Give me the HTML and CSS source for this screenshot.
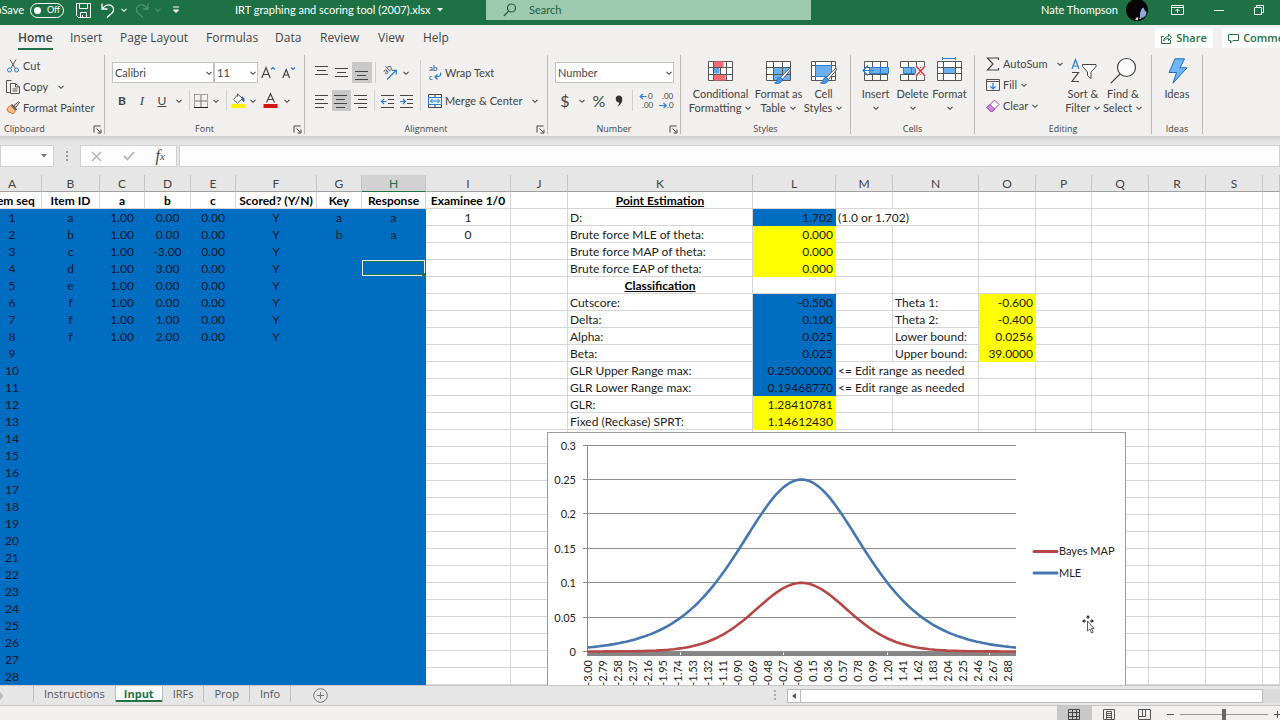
FILE: index.html
```html
<!DOCTYPE html>
<html lang="en">
<head>
<meta charset="utf-8">
<title>IRT graphing and scoring tool (2007).xlsx - Excel</title>
<link rel="stylesheet" href="styles.css">
</head>
<body>
<svg class="defs" aria-hidden="true">
  <symbol id="chev" viewBox="0 0 8 8"><path d="M1.5 2.8 4 5.3 6.5 2.8" fill="none" stroke="currentColor" stroke-width="1.1"/></symbol>
  <symbol id="launch" viewBox="0 0 9 9"><path d="M1 7.5V1h6.5M3.5 3.5l4 4M8 4.5V8H4.500" fill="none" stroke="currentColor"/></symbol>
  <symbol id="brush" viewBox="0 0 18 18"><path d="M17 .8 7.500 10.200l2 2.200L17.600 2.800Z" fill="#fff" stroke="#555"/><path d="M7.200 10.500c-2 0-3 1.200-3.200 3-.1 1.500-1.200 2-2.500 2.300 1.500 1.200 6.500 1.300 8-2.800Z" fill="#4a9ae0" stroke="#2b6fb5"/></symbol>
</svg>

<header class="titlebar">
  <div class="quick">
    <span class="autosave">AutoSave</span>
    <button class="toggle" aria-label="AutoSave off"><i></i>Off</button>
    <button class="q-save" aria-label="Save"><svg width="15" height="15" viewBox="0 0 15 15" fill="none" stroke="#fff"><path d="M.5.5h14v14H2.500l-2-2ZM3.500.5v5h8v-5M4.500 14.500v-5h6v5M6.500 12v2"/></svg></button>
    <button class="q-undo" aria-label="Undo"><svg width="14" height="15" viewBox="0 0 14 15" fill="none" stroke="#fff" stroke-width="1.300"><path d="M1 .5v5.500h5.500M1.200 5.800C4 2 8 .8 10.800 3c2.500 2 2.200 5 .2 7l-5 4.500"/></svg></button>
    <button class="q-chev" aria-label="Undo list"><svg width="8" height="8"><use href="#chev"/></svg></button>
    <button class="q-redo dim" aria-label="Redo"><svg width="14" height="15" viewBox="0 0 14 15" fill="none" stroke="currentColor" stroke-width="1.300"><path d="M13 .5v5.500H7.500M12.800 5.800C10 2 6 .8 3.200 3 .7 5 1 8 3 10l5 4.500"/></svg></button>
    <button class="q-chev dim" aria-label="Redo list"><svg width="8" height="8"><use href="#chev"/></svg></button>
    <button class="q-more" aria-label="Customize toolbar"><svg width="8" height="8" viewBox="0 0 8 8"><path d="M1 1h6M1.500 4 4 6.500 6.500 4Z" fill="#fff" stroke="#fff"/></svg></button>
    <span class="doc">IRT graphing and scoring tool (2007).xlsx</span>
    <svg width="6" height="4" viewBox="0 0 6 4"><path d="M0 0h6L3 3.500Z" fill="#fff"/></svg>
  </div>
  <label class="search"><svg width="14" height="14" viewBox="0 0 14 14" fill="none" stroke="#1f5c3b" stroke-width="1.200"><circle cx="8.500" cy="5" r="4"/><path d="M5.700 8 .8 13"/></svg><input type="text" placeholder="Search" aria-label="Search"></label>
  <div class="account">
    <span>Nate Thompson</span>
    <svg class="avatar" width="22" height="22" viewBox="0 0 22 22"><circle cx="11" cy="11" r="11" fill="#060608"/><path d="M14 19v-5l1.500-4 2-1.500 1 2.500 2 2-.5 3-2.500 2.500Z" fill="#8fa9d6"/><path d="M9 20.500 11 18l1.500 1-1 2.500ZM13 20l1-1.500 1.500 1.500Z" fill="#d8d6dc"/></svg>
    <button aria-label="Ribbon display options"><svg width="13" height="10" viewBox="0 0 13 10" fill="none" stroke="#fff"><path d="M.5.5h12v9H.5ZM.5 2.500h12M6.500 8V4M4.500 6l2-2 2 2"/></svg></button>
    <button aria-label="Minimize"><svg width="10" height="10" viewBox="0 0 10 10" stroke="#fff"><path d="M0 5.500h10"/></svg></button>
    <button aria-label="Restore"><svg width="10" height="10" viewBox="0 0 10 10" fill="none" stroke="#fff"><path d="M.5 2.500h7v7h-7ZM2.500 2.500v-2h7v7h-2"/></svg></button>
  </div>
</header>

<nav class="tabs">
  <div class="tablist">
    <button class="on">Home</button><button>Insert</button><button>Page Layout</button><button>Formulas</button><button>Data</button><button>Review</button><button>View</button><button>Help</button>
  </div>
  <div class="share">
    <button><svg width="11" height="11" viewBox="0 0 11 11" fill="none" stroke="#217346"><path d="M3 3.500H.5v7h9V7M2.500 8C3 5 5 3.500 7.500 3.500V1l3 3.500-3 3V5.500C5 5.500 3.500 6.500 2.500 8Z"/></svg>Share</button>
    <button class="comments"><svg width="11" height="11" viewBox="0 0 11 11" fill="none" stroke="#217346"><path d="M.5 1.500h10v6H5l-2.500 2.500V7.500h-2Z"/></svg>Comments</button>
  </div>
</nav>

<section class="ribbon">
  <div class="group g-clip">
    <div class="stack">
      <button><svg width="14" height="14" viewBox="0 0 14 14" fill="none" stroke="#555"><path d="M4 .5 9 9M10 .5 5 9"/><circle cx="3.500" cy="11" r="2" stroke="#2b7cd3"/><circle cx="10.500" cy="11" r="2" stroke="#2b7cd3"/></svg>Cut</button>
      <button><svg width="14" height="14" viewBox="0 0 14 14" fill="none" stroke="#555"><path d="M4.500 12.500H.5V.5h5M4.500 3.500h5l4 3.500v6.500h-9ZM9.500 3.500V7h4M6.500 9h5M6.500 11h5"/></svg>Copy<svg class="far" width="8" height="8"><use href="#chev"/></svg></button>
      <button><svg width="14" height="14" viewBox="0 0 14 14"><path d="M12.500.8 8 4.500l1.800 2 3.500-4.800Z" fill="#ddd" stroke="#555"/><path d="M5.500 3.500 10.500 9" stroke="#555" stroke-width="1.800"/><path d="M4.500 4.500 9.500 9.800 7 13 4.500 11.500 2.500 11 .8 7.800Z" fill="#f8c28a" stroke="#d2691e"/></svg>Format Painter</button>
    </div>
    <div class="glabel">Clipboard<button aria-label="Clipboard settings"><svg width="9" height="9"><use href="#launch"/></svg></button></div>
  </div>

  <div class="group g-font">
    <div class="rows">
      <div class="row">
        <span class="combo c-font"><select aria-label="Font"><option>Calibri</option></select><svg width="8" height="8"><use href="#chev"/></svg></span><span class="combo c-size"><select aria-label="Font size"><option>11</option></select><svg width="8" height="8"><use href="#chev"/></svg></span>
        <button class="grow" aria-label="Increase font size"><svg width="14" height="14" viewBox="0 0 14 14" fill="none" stroke="#444" stroke-width="1.200"><path d="M.8 12 5 1.500 9.200 12M2.300 8.500h5.400"/><path d="M10 3.500 12 1.500l2 2" stroke="#2b7cd3"/></svg></button>
        <button class="grow" aria-label="Decrease font size"><svg width="14" height="14" viewBox="0 0 14 14" fill="none" stroke="#444" stroke-width="1.200"><path d="M1.800 12 5.200 3.500 8.600 12M3 9h4.400"/><path d="m10 1.500 2 2 2-2" stroke="#2b7cd3"/></svg></button>
      </div>
      <div class="row">
        <button class="w20 bold">B</button><button class="w20 ital">I</button><button class="w20 under">U</button><button class="ch" aria-label="Underline styles"><svg width="8" height="8"><use href="#chev"/></svg></button>
        <i class="sep"></i>
        <button class="w16" aria-label="Borders"><svg width="14" height="14" viewBox="0 0 14 14" fill="none" stroke="#555"><path d="M.5.5h13v13" stroke-dasharray="1 1"/><path d="M.5.5v13" stroke-dasharray="1 1"/><path d="M7 1v12M1 7h12" stroke="#777"/><path d="M0 13.500h14" stroke="#222"/></svg></button><button class="ch" aria-label="Border styles"><svg width="8" height="8"><use href="#chev"/></svg></button>
        <i class="sep"></i>
        <button class="w16" aria-label="Fill color"><svg width="15" height="15" viewBox="0 0 15 15"><path d="M7 1.500 2.500 6.500 6.500 10l5-4.500ZM6.500.5v3" fill="#fff" stroke="#555"/><path d="M11 4c2 .5 2.500 2.500 1.800 4.500-1.300-.5-1.800-2-1.800-4.500Z" fill="#2b5c9e" stroke="#2b5c9e"/><path d="M.5 11h14v4H.5Z" fill="#fff200"/></svg></button><button class="ch" aria-label="Fill colors"><svg width="8" height="8"><use href="#chev"/></svg></button>
        <button class="w20" aria-label="Font color"><svg width="15" height="15" viewBox="0 0 15 15"><path d="M3.500 9.500 7.500.8l4 8.700M5 6.500h5" fill="none" stroke="#444" stroke-width="1.200"/><path d="M.5 11h14v4H.5Z" fill="#d41515"/></svg></button><button class="ch" aria-label="Font colors"><svg width="8" height="8"><use href="#chev"/></svg></button>
      </div>
    </div>
    <div class="glabel">Font<button aria-label="Font settings"><svg width="9" height="9"><use href="#launch"/></svg></button></div>
  </div>

  <div class="group g-align">
    <div class="pair">
      <div class="rows">
        <div class="row">
          <button class="w20" aria-label="Top align"><svg width="14" height="14" viewBox="0 0 14 14" stroke="#444"><path d="M0 .5h13M2 4.500h9M0 8.500h13"/></svg></button><button class="w20" aria-label="Middle align"><svg width="14" height="14" viewBox="0 0 14 14" stroke="#444"><path d="M0 2.500h13M2 6.500h9M0 10.500h13"/></svg></button><button class="w20 act" aria-label="Bottom align"><svg width="14" height="14" viewBox="0 0 14 14" stroke="#444"><path d="M0 5.500h13M2 9.500h9M0 13.500h13"/></svg></button>
          <i class="sep"></i>
          <button class="w20" aria-label="Orientation"><svg width="17" height="15" viewBox="0 0 17 15"><text x="0" y="0" transform="translate(5 10) rotate(-45)" font-size="9" fill="#444">ab</text><path d="M6 14.500 15 5.500M11 5.300h4.300V9.500" fill="none" stroke="#2b7cd3" stroke-width="1.200"/></svg></button><button class="ch" aria-label="Orientation list"><svg width="8" height="8"><use href="#chev"/></svg></button>
        </div>
        <div class="row">
          <button class="w20" aria-label="Align left"><svg width="14" height="14" viewBox="0 0 14 14" stroke="#444"><path d="M0 1.500h13M0 5.500h9M0 9.500h13M0 13.500h9"/></svg></button><button class="w20 act" aria-label="Center"><svg width="14" height="14" viewBox="0 0 14 14" stroke="#444"><path d="M0 1.500h13M2 5.500h9M0 9.500h13M2 13.500h9"/></svg></button><button class="w20" aria-label="Align right"><svg width="14" height="14" viewBox="0 0 14 14" stroke="#444"><path d="M0 1.500h13M4 5.500h9M0 9.500h13M4 13.500h9"/></svg></button>
          <i class="sep"></i>
          <button class="w20" aria-label="Decrease indent"><svg width="14" height="14" viewBox="0 0 14 14" stroke="#444" fill="none"><path d="M0 1.500h13M7 5.500h6M7 9.500h6M0 13.500h13"/><path d="M5.500 7.500H.8M3 5 .5 7.500 3 10" stroke="#2b7cd3" stroke-width="1.200"/></svg></button><button class="w20" aria-label="Increase indent"><svg width="14" height="14" viewBox="0 0 14 14" stroke="#444" fill="none"><path d="M0 1.500h13M7 5.500h6M7 9.500h6M0 13.500h13"/><path d="M0 7.500h5M3 5l2.500 2.500L3 10" stroke="#2b7cd3" stroke-width="1.200"/></svg></button>
        </div>
      </div>
      <div class="rows side">
        <div class="row"><button class="lab"><svg width="14" height="15" viewBox="0 0 14 15"><text x="1" y="6" font-size="8" fill="#444">ab</text><text x="1" y="15" font-size="8" fill="#444">c</text><path d="M12.500 7.500c1 3-1 4.500-5.500 4.500M9.500 9.500 7 12l2.500 2.500" fill="none" stroke="#2b7cd3" stroke-width="1.200"/></svg>Wrap Text</button></div>
        <div class="row"><button class="lab"><svg width="14" height="14" viewBox="0 0 14 14" fill="none" stroke="#444"><path d="M.5.5h13v13H.5ZM7 .5V4M7 10v3.500"/><path d="M.5 3.500h13v7H.5Z" fill="#e4f1fc" stroke="#2b7cd3"/><path d="M2.500 7h9M4.500 5l-2 2 2 2M9.500 5l2 2-2 2" stroke="#2b7cd3"/></svg>Merge &amp; Center<svg class="far" width="8" height="8"><use href="#chev"/></svg></button></div>
      </div>
    </div>
    <div class="glabel">Alignment<button aria-label="Alignment settings"><svg width="9" height="9"><use href="#launch"/></svg></button></div>
  </div>

  <div class="group g-num">
    <div class="rows">
      <div class="row"><span class="combo c-num"><select aria-label="Number format"><option>Number</option></select><svg width="8" height="8"><use href="#chev"/></svg></span></div>
      <div class="row">
        <button class="w20 big">$</button><button class="ch" aria-label="Currency list"><svg width="8" height="8"><use href="#chev"/></svg></button><button class="w20 big">%</button><button class="w20" aria-label="Comma style"><svg width="8" height="12" viewBox="0 0 8 12"><path d="M4 .5c2 0 3.300 1.500 3.300 3.800C7.300 8 5 10.500 2 11.500c1.500-1.200 2.300-2.500 2.300-4C2.200 7.600.7 6 .7 4 .7 2 2 .5 4 .5Z" fill="#333"/></svg></button>
        <i class="sep"></i>
        <button class="w20" aria-label="Increase decimal"><svg width="15" height="16" viewBox="0 0 15 16"><text x="9" y="6" font-size="8" fill="#444">0</text><text x="3" y="15" font-size="8" fill="#444">.00</text><path d="M7.500 3.500h-6M4 1 1.200 3.500 4 6" fill="none" stroke="#2b7cd3" stroke-width="1.200"/></svg></button><button class="w20" aria-label="Decrease decimal"><svg width="15" height="16" viewBox="0 0 15 16"><text x="3" y="6" font-size="8" fill="#444">.00</text><text x="8" y="15" font-size="8" fill="#444">.0</text><path d="M0 12.500h7M4.500 10l2.800 2.500L4.500 15" fill="none" stroke="#2b7cd3" stroke-width="1.200"/></svg></button>
      </div>
    </div>
    <div class="glabel">Number<button aria-label="Number settings"><svg width="9" height="9"><use href="#launch"/></svg></button></div>
  </div>

  <div class="group g-styles">
    <div class="bigs">
      <button><svg width="27" height="27" viewBox="0 0 27 27" fill="none"><path d="M1.500 3.500h24v19h-24Z" fill="#fff" stroke="#555"/><path d="M6.500 3.500h10v6h-10ZM6.500 16.500h12v6h-12Z" fill="#ff6b72"/><path d="M6.500 9.500h6v6h-6Z" fill="#5da5e8"/><path d="M1.500 9.500h24M1.500 16.500h24M6.500 3.500v19M19.500 3.500v19M13.500 9.500v7" stroke="#555"/></svg><span>Conditional<br>Formatting <svg width="8" height="8"><use href="#chev"/></svg></span></button>
      <button><svg width="27" height="27" viewBox="0 0 27 27" fill="none"><path d="M1.500 3.500h24v19h-24Z" fill="#fff"/><path d="M8.500 9.500h17v13h-17Z" fill="#6db0ee"/><path d="M1.500 3.500h24v19h-24ZM1.500 9.500h24M1.500 16.500h24M8.500 3.500v19M17.500 3.500v19" stroke="#555"/><use href="#brush" x="8" y="9" width="18" height="18"/></svg><span>Format as<br>Table <svg width="8" height="8"><use href="#chev"/></svg></span></button>
      <button><svg width="27" height="27" viewBox="0 0 27 27" fill="none"><path d="M1.500 3.500h24v19h-24Z" fill="#fff" stroke="#555"/><path d="M5.500 3.500v19M1.500 7.500h24M1.500 18.500h24M21.500 3.500v19" stroke="#555"/><path d="M5.500 7.500h16v11h-16Z" fill="#6db0ee" stroke="#2b7cd3"/><use href="#brush" x="9" y="9" width="18" height="18"/></svg><span>Cell<br>Styles <svg width="8" height="8"><use href="#chev"/></svg></span></button>
    </div>
    <div class="glabel">Styles</div>
  </div>

  <div class="group g-cells">
    <div class="bigs">
      <button><svg width="27" height="27" viewBox="0 0 27 27" fill="none"><path d="M2.500 3.500h23v19h-23ZM2.500 9.500h23M2.500 16.500h23M10.500 3.500v19M18.500 3.500v19" fill="#fff" stroke="#555"/><path d="M7.500 9.500h19v6h-19Z" fill="#6db0ee" stroke="#2b7cd3"/><path d="M18.500 9.500v6M12 12.500H.8M6 7.500l-5 5 5 5" stroke="#2b7cd3" stroke-width="1.200"/></svg><span>Insert<br><svg width="8" height="8"><use href="#chev"/></svg></span></button>
      <button><svg width="27" height="27" viewBox="0 0 27 27" fill="none"><path d="M1.500 3.500h24v6h-24ZM1.500 16.500h24v6h-24ZM9.500 3.500v6M17.500 3.500v6M9.500 16.500v6M17.500 16.500v6" fill="#fff" stroke="#555"/><path d="M4.500 9.500h12v6h-12Z" fill="#6db0ee" stroke="#2b7cd3"/><path d="M12.500 9.500v6" stroke="#2b7cd3"/><path d="m17 8 9 10M26 8 17 18" stroke="#f1f0ef" stroke-width="4"/><path d="m17 8 9 10M26 8 17 18" stroke="#e0393e" stroke-width="1.400"/></svg><span>Delete<br><svg width="8" height="8"><use href="#chev"/></svg></span></button>
      <button><svg width="27" height="27" viewBox="0 0 27 27" fill="none"><path d="M1.500 3.500h24v19h-24Z" fill="#fff" stroke="#555"/><path d="M7.500 9.500h12v6h-12Z" fill="#6db0ee"/><path d="M1.500 9.500h24M1.500 15.500h24M7.500 3.500v19M19.500 3.500v19" stroke="#555"/><path d="M6.500.5h13M6.500-1v3M19.500-1v3" stroke="#2b7cd3"/></svg><span>Format<br><svg width="8" height="8"><use href="#chev"/></svg></span></button>
    </div>
    <div class="glabel">Cells</div>
  </div>

  <div class="group g-edit">
    <div class="pair">
      <div class="stack">
        <button><svg width="14" height="14" viewBox="0 0 14 14" fill="none" stroke="#444" stroke-width="1.200"><path d="M12.500 3V1h-11L7 7l-5.500 6h11v-2"/></svg>AutoSum<svg class="far" width="8" height="8"><use href="#chev"/></svg></button>
        <button><svg width="14" height="14" viewBox="0 0 14 14" fill="none" stroke="#555"><path d="M.5 1.500h13v11H.5ZM.5 3.500h13"/><path d="M7 5v6M4.500 8.500 7 11l2.500-2.500" stroke="#2b7cd3" stroke-width="1.200"/></svg>Fill<svg width="8" height="8"><use href="#chev"/></svg></button>
        <button><svg width="14" height="14" viewBox="0 0 14 14"><path d="M8.500 1 13 5.500 5.500 13 1 8.500Z" fill="#fff" stroke="#a33fb5"/><path d="M4 5.500 8.500 10l-3 3L1 8.500Z" fill="#d48be0" stroke="#a33fb5"/></svg>Clear<svg width="8" height="8"><use href="#chev"/></svg></button>
      </div>
      <div class="bigs">
        <button><svg width="27" height="27" viewBox="0 0 27 27" fill="none"><path d="M2 11 5.500 1.500 9 11M3 8h5" stroke="#2b7cd3" stroke-width="1.200"/><path d="M2 14.500h6.500L2 23.500h7" stroke="#444" stroke-width="1.200"/><path d="M12.500 6.500h13.500v2l-5 5.500v6.500l-3.500-3V14l-5-5.500Z" fill="#fff" stroke="#444"/></svg><span>Sort &amp;<br>Filter <svg width="8" height="8"><use href="#chev"/></svg></span></button>
        <button><svg width="27" height="27" viewBox="0 0 27 27" fill="none" stroke="#444" stroke-width="1.200"><circle cx="16.500" cy="9.500" r="9" fill="#fafafa"/><path d="M10 16 .8 25.200"/></svg><span>Find &amp;<br>Select <svg width="8" height="8"><use href="#chev"/></svg></span></button>
      </div>
    </div>
    <div class="glabel">Editing</div>
  </div>

  <div class="group g-ideas">
    <div class="bigs"><button><svg width="27" height="27" viewBox="0 0 27 27"><path d="M11 .8h9.500l-4.500 9h7L9 25.200l3.500-10.700H5Z" fill="#6db5f5" stroke="#1f6fc0"/></svg><span>Ideas</span></button></div>
    <div class="glabel">Ideas</div>
  </div>
</section>

<section class="formula">
  <button class="namebox" aria-label="Name box"><svg width="6" height="4" viewBox="0 0 6 4"><path d="M0 0h6L3 3.500Z" fill="#777"/></svg></button>
  <svg class="dots" width="3" height="11" viewBox="0 0 3 11"><path d="M1 0v2M1 4v2M1 8v2" stroke="#999" stroke-width="2"/></svg>
  <div class="fx">
    <button aria-label="Cancel"><svg width="11" height="11" viewBox="0 0 11 11" stroke="#b5b5b5" stroke-width="1.500"><path d="m1 1 9 9M10 1 1 10"/></svg></button>
    <button aria-label="Enter"><svg width="12" height="10" viewBox="0 0 12 10" fill="none" stroke="#b5b5b5" stroke-width="1.800"><path d="m1 5 3.500 3.500L11 1"/></svg></button>
    <button class="fn"><i>f</i><small>x</small></button>
  </div>
  <input type="text" class="fbar" aria-label="Formula bar">
</section>

<main class="sheet">
  <table id="grid"></table>
  <svg id="chart" class="chart" width="579" height="260" viewBox="0 0 579 260" role="img" aria-label="Bayes MAP and MLE likelihood by theta"></svg>
  <svg class="cursor" width="13" height="19" viewBox="0 0 13 19"><path d="M6 0l2 2.500H4ZM0 6l2.500-2v4ZM12 6 9.500 4v4Z" fill="#222"/><path d="M2 6h2M8 6h2M6 2v2" stroke="#222"/><path d="M5.500 6v10l2.300-2 1.700 4 1.700-.8-1.700-3.700h2.500Z" fill="#fff" stroke="#333" stroke-width=".8"/></svg>
</main>

<footer>
  <div class="sheets">
    <svg class="nav" width="4" height="8" viewBox="0 0 4 8"><path d="M0 0 3.500 4 0 8Z" fill="#bbb"/></svg>
    <div class="sheetlist">
      <button>Instructions</button><button class="on">Input</button><button>IRFs</button><button>Prop</button><button>Info</button>
    </div>
    <button class="add" aria-label="New sheet"><svg width="15" height="15" viewBox="0 0 15 15" fill="none" stroke="#777"><circle cx="7.500" cy="7.500" r="6.800"/><path d="M7.500 4v7M4 7.500h7"/></svg></button>
    <svg class="dots" width="3" height="11" viewBox="0 0 3 11"><path d="M1 0v2M1 4v2M1 8v2" stroke="#aaa" stroke-width="2"/></svg>
    <div class="hscroll"><button aria-label="Scroll left"><svg width="4" height="6" viewBox="0 0 4 6"><path d="M4 0v6L0 3Z" fill="#555"/></svg></button><i></i></div>
  </div>
  <div class="status">
    <button class="on" aria-label="Normal view"><svg width="13" height="13" viewBox="0 0 13 13" fill="none" stroke="#444"><path d="M.5 1.500h11v10H.5ZM.5 4.500h11M.5 8.500h11M4.500 1.500v10M8.500 1.500v10"/></svg></button>
    <button aria-label="Page layout view"><svg width="13" height="13" viewBox="0 0 13 13" fill="none" stroke="#555"><path d="M.5 1.500h11v10H.5ZM3.500 3.500h5v8h-5ZM4 5.500h4M4 7.500h4M4 9.500h4"/></svg></button>
    <button aria-label="Page break view"><svg width="13" height="13" viewBox="0 0 13 13" fill="none" stroke="#555"><path d="M.5 1.500h12v10H.5ZM.5 8.500h7v-7M4.500 1.500v7"/></svg></button>
    <button class="zoom" aria-label="Zoom out"><svg width="8" height="9" viewBox="0 0 8 9" stroke="#555"><path d="M0 4.500h7"/></svg></button>
    <input type="range" min="0" max="100" value="50" aria-label="Zoom">
    <button class="zoom" aria-label="Zoom in"><svg width="8" height="9" viewBox="0 0 8 9" stroke="#555"><path d="M0 4.500h7M3.500 1v7"/></svg></button>
  </div>
</footer>
<script src="script.js"></script>
</body>
</html>
```
FILE: styles.css
```css
* { box-sizing: border-box; }
body {
  margin: 0;
  height: 100vh;
  display: flex;
  flex-direction: column;
  overflow: hidden;
  background: #e6e6e6;
  color: #444;
  font: 11px/14px Lato, "Open Sans", sans-serif;
}
button, input, select { font: inherit; color: inherit; }
button {
  display: flex;
  align-items: center;
  justify-content: center;
  padding: 0;
  border: 0;
  background: none;
  white-space: nowrap;
}
svg { flex: none; display: block; overflow: visible; }
.defs { position: absolute; width: 0; height: 0; }

/* Title bar */
.titlebar {
  display: flex;
  height: 25px;
  background: #1e7145;
  color: #fff;
  overflow: hidden;
}
.quick { display: flex; align-items: center; width: 486px; height: 20px; }
.autosave { width: 24px; display: flex; justify-content: flex-end; }
.toggle {
  width: 34px;
  height: 15px;
  margin: 0 12px 0 6px;
  gap: 6px;
  border: 1px solid #fff;
  border-radius: 8px;
  font-size: 9px;
}
.toggle i { width: 7px; height: 7px; border-radius: 50%; background: #fff; }
.q-undo { margin-left: 10px; }
.q-chev { width: 18px; }
.q-redo { margin-left: 2px; }
.q-more { margin-left: 5px; }
.dim { color: #4f9470; }
.doc { margin: 0 6px 0 55px; white-space: nowrap; }
.search {
  display: flex;
  align-items: center;
  gap: 12px;
  width: 325px;
  height: 20px;
  padding-left: 17px;
  background: #9dcaaf;
}
.search input { flex: 1; min-width: 0; padding: 0; border: 0; outline: 0; background: none; }
.search input::placeholder { color: #1f5c3b; opacity: 1; }
.account { display: flex; align-items: center; height: 20px; margin-left: auto; padding-right: 16px; }
.avatar { margin: 0 23px 0 8px; }
.account button + button { margin-left: 30px; }

/* Ribbon tabs */
.tabs {
  display: flex;
  justify-content: space-between;
  height: 25px;
  background: #f1f0ef;
  font-family: "Open Sans", "Noto Sans", sans-serif;
  overflow: hidden;
}
.tablist {
  display: grid;
  grid-template-columns: 52px 50px 86px 69px 45px 58px 45px auto;
  justify-items: start;
  padding: 1px 0 0 18px;
  font-size: 12px;
}
.tablist .on { font-weight: 600; box-shadow: inset 0 -2px #1e7145; }
.share { display: flex; gap: 9px; padding-top: 3px; margin-right: -27px; }
.share button {
  width: 58px;
  height: 20px;
  gap: 4px;
  background: #fff;
  color: #217346;
  font-weight: 600;
}
.share .comments { width: 85px; }

/* Ribbon */
.ribbon { display: flex; height: 86px; background: #f1f0ef; }
.group {
  display: flex;
  flex-direction: column;
  justify-content: space-between;
  flex: none;
  margin: 5px 0 2px;
  border-right: 1px solid #b9b9b9;
}
.g-clip { width: 105px; }
.g-font { width: 200px; }
.g-align { width: 243px; }
.g-num { width: 133px; }
.g-styles { width: 170px; }
.g-cells { width: 124px; }
.g-edit { width: 177px; }
.g-ideas { width: 51px; }
.glabel {
  position: relative;
  height: 10px;
  font: 9px/10px "Open Sans", "Noto Sans", sans-serif;
  text-align: center;
}
.g-clip .glabel { padding-left: 4px; text-align: left; }
.glabel button { position: absolute; right: 2px; top: 1px; }
.stack { display: flex; flex-direction: column; }
.stack button { height: 21px; gap: 3px; justify-content: flex-start; }
.g-clip .stack { padding-left: 6px; }
.far { margin-left: 6px; }
.rows { display: flex; flex-direction: column; gap: 7px; padding: 7px 0 0 7px; }
.row { display: flex; align-items: center; height: 21px; }
.pair { display: flex; }
.combo { position: relative; display: flex; align-items: center; height: 21px; }
.combo select {
  width: 100%;
  height: 100%;
  padding: 0 2px;
  border: 1px solid #c3c3c3;
  border-radius: 0;
  background: #fff;
  appearance: none;
}
.combo svg { position: absolute; right: 1px; }
.c-font { width: 102px; }
.c-size { width: 44px; }
.c-num { width: 119px; }
.grow { width: 20px; }
.w20 { width: 20px; height: 21px; }
.w16 { width: 16px; height: 21px; }
.ch { width: 14px; height: 21px; }
.act { background: #c8c8c8; }
.bold { font-size: 12px; font-weight: 700; }
.ital { font: italic 13px "Liberation Serif", serif; }
.under { font-size: 12px; text-decoration: underline; }
.big { font-size: 16px; }
.sep { width: 1px; height: 21px; margin: 0 3px; background: #d0d0d0; }
.side { margin: 5px 0 0 3px; padding: 2px 0 0 7px; border-left: 1px solid #d0d0d0; }
.g-align .rows:first-child { width: 112px; }
.lab { gap: 3px; }
.bigs { display: flex; justify-content: center; padding-top: 3px; }
.bigs button { flex-direction: column; justify-content: flex-start; gap: 2px; }
.bigs span { line-height: 14px; }
.bigs span svg { display: inline-block; }
.g-styles .bigs { display: grid; grid-template-columns: 60px 56px 34px; }
.g-cells .bigs button { width: 37px; }
.g-edit .stack { width: 88px; margin-top: -2px; padding-left: 11px; }
.g-edit .bigs button { width: 40px; }

/* Formula bar */
.formula {
  display: flex;
  align-items: center;
  height: 39px;
  padding-top: 1px;
  background: linear-gradient(#cfcfcf, #e6e6e6 6px);
}
.namebox { width: 54px; height: 22px; padding-right: 6px; justify-content: flex-end; background: #fdfdfd; border: 1px solid #cfcfcf; }
.dots { margin: 0 11px 0 12px; }
.fx { display: flex; width: 97px; height: 22px; background: #fdfdfd; border: 1px solid #cfcfcf; }
.fx button { flex: 1; }
.fn { font: 16px/16px "Liberation Serif", serif; }
.fn small { font-size: 11px; font-style: italic; }
.fbar { flex: 1; height: 22px; margin-left: 2px; border: 1px solid #cfcfcf; background: #fdfdfd; }

/* Worksheet */
.sheet { position: relative; flex: 1; min-height: 0; overflow: hidden; background: #fff; }
.sheet table {
  width: calc(100% + 17px);
  margin-left: -17px;
  table-layout: fixed;
  border-collapse: separate;
  border-spacing: 0;
  color: #1c1c1c;
  font: 12px/14px Lato, "Open Sans", sans-serif;
}
.sheet td, .sheet th {
  height: 17px;
  padding: 2px 2px 0;
  border: solid #d6d6d6;
  border-width: 0 1px 1px 0;
  overflow: hidden;
  white-space: nowrap;
  text-align: left;
}
.sheet thead th {
  background: #e6e6e6;
  border-color: #c4c4c4 #c4c4c4 #a0a0a0;
  color: #444;
  font-weight: 400;
  text-align: center;
}
.sheet thead .sel { background: #d2d2d2; color: #217346; border-bottom-color: #217346; }
.sheet .c { text-align: center; }
.sheet .r { text-align: right; }
.sheet .h { text-align: center; font-weight: 700; color: #000; }
.sheet .u { text-decoration: underline; }
.sheet .blue { background: #006dc0; border-color: #006dc0; color: #04182f; }
.sheet .yellow { background: #ff0; border-color: #ff0; }
.sheet .cell-sel { position: relative; box-shadow: inset 0 0 0 1px #e3f1e8, inset 0 0 0 2px #217346; }
.cell-sel::after { content: ""; position: absolute; right: 0; bottom: 0; width: 3px; height: 3px; background: #217346; }
.chart { position: absolute; left: 547px; top: 257px; font: 11px Lato, "Open Sans", sans-serif; }
.chart text { fill: #222; }
.cursor { position: absolute; left: 1082px; top: 440px; }

/* Sheet tabs and status bar */
.sheets { display: flex; align-items: center; height: 21px; border: solid #c6c6c6; border-width: 1px 0; background: #e6e6e6; }
.sheetlist {
  display: flex;
  align-self: stretch;
  margin-left: 29px;
  padding-bottom: 3px;
  font: 11px/14px "Open Sans", "Noto Sans", sans-serif;
}
.sheetlist button { padding: 0 10px; border-right: 1px solid #bdbdbd; color: #555; }
.sheetlist button:first-child { border-left: 1px solid #bdbdbd; }
.sheetlist .on { padding: 0 8px; background: #fff; color: #217346; font-weight: 700; box-shadow: inset 0 -2px #217346; }
.add { margin-left: 22px; }
.sheets .dots { margin: 0 10px 0 auto; }
.hscroll { display: flex; width: 493px; height: 14px; background: #dadada; }
.hscroll button { width: 14px; border: 1px solid #bbb; background: #fdfdfd; }
.hscroll i { width: 462px; border: 1px solid #bbb; border-left: 0; background: #fff; }
.status { display: flex; justify-content: flex-end; height: 14px; padding-left: 8px; margin-right: -3px; background: #f1f0ef; overflow: hidden; }
.status button { width: 35px; height: 17px; }
.status .on { background: #c8c8c8; }
.status .zoom { width: 10px; }
.status button.zoom:nth-of-type(4) { margin-left: 4px; }
.status input { width: 88px; height: 17px; margin: 0 5px 0 4px; appearance: none; background: linear-gradient(#999, #999) center / 100% 1px no-repeat; }
.status input::-webkit-slider-thumb { appearance: none; width: 4px; height: 11px; background: #666; }
```
FILE: script.js
```js
const widths = [59, 58, 45, 46, 45, 81, 45, 64, 85, 57, 185, 83, 57, 86, 57, 56, 57, 57, 57, 0];
const letters = 'ABCDEFGHIJKLMNOPQRS ';
const items = [
  ['a', '1.00', '0.00', '0.00', 'Y', 'a', 'a', '1'],
  ['b', '1.00', '0.00', '0.00', 'Y', 'b', 'a', '0'],
  ['c', '1.00', '-3.00', '0.00', 'Y'],
  ['d', '1.00', '3.00', '0.00', 'Y'],
  ['e', '1.00', '0.00', '0.00', 'Y'],
  ['f', '1.00', '0.00', '0.00', 'Y'],
  ['f', '1.00', '1.00', '0.00', 'Y'],
  ['f', '1.00', '2.00', '0.00', 'Y']
];
const heads = ['Item seq', 'Item ID', 'a', 'b', 'c', 'Scored? (Y/N)', 'Key', 'Response', 'Examinee 1/0'];
const cells = {
  K1: ['Point Estimation', 'h u'],
  K2: ['D:', ''], L2: ['1.702', 'r blue'], M2: ['(1.0 or 1.702)', '', 2],
  K3: ['Brute force MLE of theta:', ''], L3: ['0.000', 'r yellow'],
  K4: ['Brute force MAP of theta:', ''], L4: ['0.000', 'r yellow'],
  K5: ['Brute force EAP of theta:', ''], L5: ['0.000', 'r yellow'],
  K6: ['Classification', 'h u'],
  K7: ['Cutscore:', ''], L7: ['-0.500', 'r blue'], N7: ['Theta 1:', ''], O7: ['-0.600', 'r yellow'],
  K8: ['Delta:', ''], L8: ['0.100', 'r blue'], N8: ['Theta 2:', ''], O8: ['-0.400', 'r yellow'],
  K9: ['Alpha:', ''], L9: ['0.025', 'r blue'], N9: ['Lower bound:', ''], O9: ['0.0256', 'r yellow'],
  K10: ['Beta:', ''], L10: ['0.025', 'r blue'], N10: ['Upper bound:', ''], O10: ['39.0000', 'r yellow'],
  K11: ['GLR Upper Range max:', ''], L11: ['0.25000000', 'r blue'], M11: ['&lt;= Edit range as needed', '', 2],
  K12: ['GLR Lower Range max:', ''], L12: ['0.19468770', 'r blue'], M12: ['&lt;= Edit range as needed', '', 2],
  K13: ['GLR:', ''], L13: ['1.28410781', 'r yellow'],
  K14: ['Fixed (Reckase) SPRT:', ''], L14: ['1.14612430', 'r yellow']
};

let html = '<colgroup>' + widths.map(w => w ? `<col style="width:${w}px">` : '<col>').join('') + '</colgroup><thead><tr>';
html += [...letters].map(l => `<th class="${l === 'H' ? 'sel' : ''}">${l}</th>`).join('') + '</tr></thead><tbody>';
for (let r = 1; r <= 29; r++) {
  html += '<tr>';
  for (let c = 0; c < 20; c++) {
    let text = '', cls = '', span = 1;
    const cell = cells[letters[c] + r];
    if (cell) {
      [text, cls, span = 1] = cell;
    } else if (c < 9) {
      if (r === 1) {
        text = heads[c];
        cls = 'h';
      } else {
        text = c === 0 ? r - 1 : ((items[r - 2] || [])[c - 1] || '');
        cls = c < 8 ? 'c blue' : 'c';
        if (c === 7 && r === 5) cls += ' cell-sel';
      }
    }
    html += `<td class="${cls}"${span > 1 ? ` colspan="${span}"` : ''}>${text}</td>`;
    c += span - 1;
  }
  html += '</tr>';
}
document.getElementById('grid').innerHTML = html + '</tbody>';

// Chart: item information (MLE) and its product with the normal prior (Bayes MAP)
const left = 40, right = 469, base = 220, unit = 688;
let g = '<rect x=".5" y=".5" width="578" height="270" fill="#fff" stroke="#9a9a9a"/>';
for (let i = 0; i <= 6; i++) {
  const y = Math.round(base - i * 0.05 * unit) - 0.5;
  g += `<path d="M${left - 4} ${y}H${right}" stroke="#8c8c8c"/><text x="29" y="${y + 4}" text-anchor="end">${+(i * 0.05).toFixed(2)}</text>`;
}
g += `<path d="M${left + 0.5} 13V${base}" stroke="#8c8c8c"/><path d="M${left} 222H${right}" stroke="#858585" stroke-width="4"/>`;
for (const x of [133, 236, 340, 442]) g += `<path d="M${x}.5 220.500V223" stroke="#fff"/>`;
const curve = f => {
  let d = '';
  for (let x = left; x <= right; x += 3) {
    const t = (x - 254.5) / 70.8;
    d += (d ? 'L' : 'M') + x + ' ' + (base - 0.5 - f(t) * unit).toFixed(1);
  }
  return d;
};
const info = t => { const p = 1 / (1 + Math.exp(-1.702 * t)); return p * (1 - p); };
const prior = t => Math.exp(-t * t / 2) / Math.sqrt(2 * Math.PI);
g += `<path d="${curve(t => info(t) * prior(t))}" fill="none" stroke="#b54747" stroke-width="2.600"/>`;
g += `<path d="${curve(info)}" fill="none" stroke="#4576b0" stroke-width="2.600"/>`;
for (let i = 0; i < 29; i++) {
  g += `<text text-anchor="end" transform="translate(${45 + i * 15} 228) rotate(-90)">${(-3 + i * 0.21).toFixed(2)}</text>`;
}
g += '<path d="M487 119.500h23" stroke="#b54747" stroke-width="3" stroke-linecap="round"/><text x="512" y="123">Bayes MAP</text>';
g += '<path d="M487 141h23" stroke="#4576b0" stroke-width="3" stroke-linecap="round"/><text x="512" y="145">MLE</text>';
document.getElementById('chart').innerHTML = g;
```
